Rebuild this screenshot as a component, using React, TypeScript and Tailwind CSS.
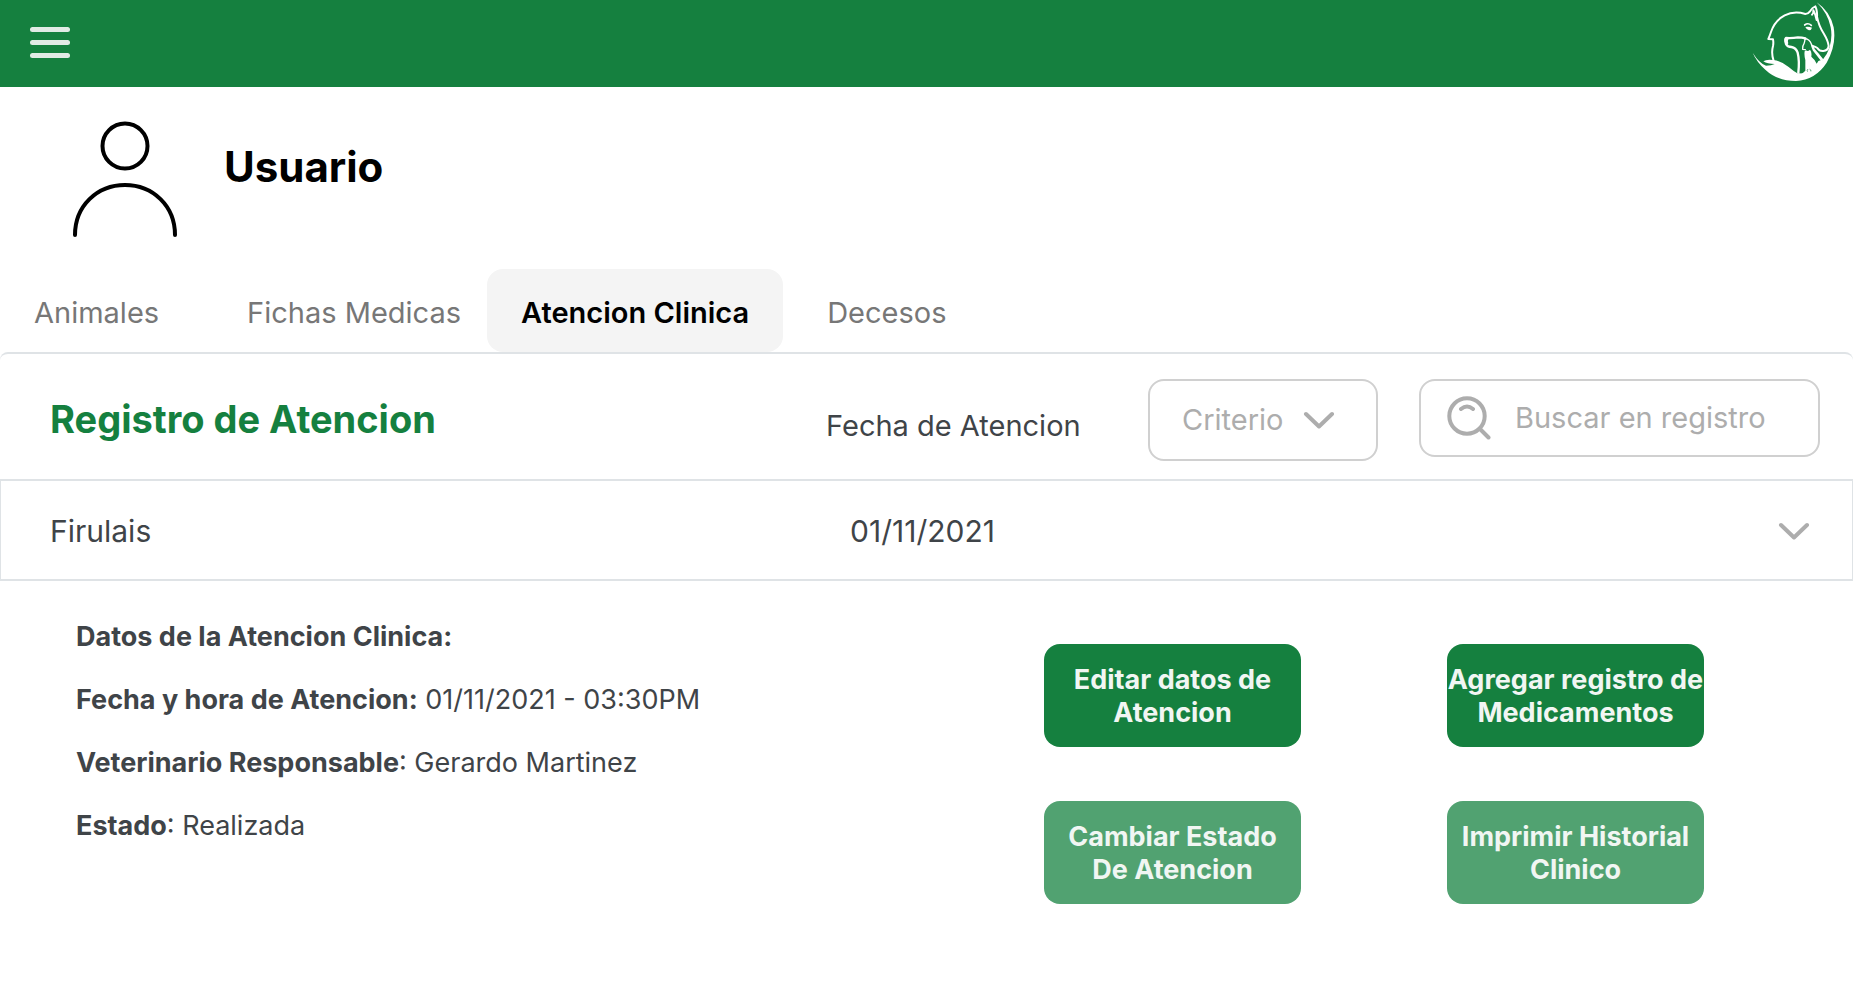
import { useState } from 'react';

function Logo() {
  return (
    <svg viewBox="0 0 339 261" className="h-[87px] w-[113px]" fill="none" stroke="#fff" strokeLinecap="round" strokeLinejoin="round" role="img" aria-label="Logo veterinaria">
      <path
        fill="#fff"
        stroke="none"
        d="M38 158 Q58 190 78 197 Q95 197 104 192 Q82 192 70 184 Q78 178 98 180 Q124 182 146 201 Q160 213 172 220 L180 220 Q188 222 196 212 L196 180 Q192 166 194 154 L198 151 Q203 156 210 149 Q216 155 214 170 Q226 180 230 191 Q236 178 246 182 Q262 164 268 144 Q278 112 272 82 Q264 40 230 7 Q270 34 281 82 Q290 136 260 188 Q226 240 168 243 Q112 243 76 209 Q50 186 38 158 Z"
      />
      <path strokeWidth="6" d="M101 183 Q93 160 99 138 Q101 128 99 118 L85 117 Q89 108 93 96 Q104 62 134 46 Q162 32 196 42 Q204 42 210 34 Q217 22 226 19 L229 27 Q232 40 231 50" />
      <path strokeWidth="6" d="M216 44 Q221 40 220 31 Q227 44 230 60 M231 50 Q236 78 252 102 Q264 122 266 138 Q264 152 250 153 Q238 154 232 144 Q226 140 220 139" />
      <path strokeWidth="5" d="M194 75 Q204 67 214 76" />
      <path fill="#fff" stroke="none" d="M196 81 Q206 78 216 83 Q214 91 207 91 Q200 90 196 81Z" />
      <path strokeWidth="7" d="M196 115 Q186 112 174 112 Q158 115 138 114 Q134 120 138 132 Q142 141 154 141 Q168 143 173 158 Q179 182 175 218" />
      <path fill="#fff" stroke="none" d="M135 113 L149 114 Q141 120 145 130 L140 136 Q130 124 135 113Z" />
      <path strokeWidth="4" d="M188 148 L196 149 M188 147 Q187 138 192 131 Q195 124 195 115 Q209 118 214 132 Q216 141 220 150 L246 183 M218 136 Q220 149 232 159 L250 181" />
      <path stroke="#15803f" strokeWidth="2" d="M203 208 q-3 3 -1 6 M210 208 q4 1 3 5" />
    </svg>
  );
}

function Chevron({ className }: { className: string }) {
  return (
    <svg viewBox="0 0 32 18" className={className} fill="none" stroke="#adadad" strokeWidth="4" strokeLinecap="round" strokeLinejoin="round" aria-hidden="true">
      <path d="M3 3 L16 15.500 L29 3" />
    </svg>
  );
}

const tabs = [
  { name: 'Animales', style: 'ml-[18px] mr-14 px-4' },
  { name: 'Fichas Medicas', style: 'mr-[10px] px-4' },
  { name: 'Atencion Clinica', style: 'mr-7 px-[34px]' },
  { name: 'Decesos', style: 'px-4' },
];

const details = [
  { label: 'Datos de la Atencion Clinica:', value: '' },
  { label: 'Fecha y hora de Atencion:', value: ' 01/11/2021 - 03:30PM' },
  { label: 'Veterinario Responsable', value: ': Gerardo Martinez' },
  { label: 'Estado', value: ': Realizada' },
];

const actions = [
  { lines: ['Editar datos de', 'Atencion'], color: 'bg-[#15803f]' },
  { lines: ['Agregar registro de', 'Medicamentos'], color: 'bg-[#15803f]' },
  { lines: ['Cambiar Estado', 'De Atencion'], color: 'bg-[#51a271]' },
  { lines: ['Imprimir Historial', 'Clinico'], color: 'bg-[#51a271]' },
];

export default function App() {
  const [active, setActive] = useState('Atencion Clinica');
  const [open, setOpen] = useState(true);

  return (
    <div className="min-h-screen bg-white font-['Inter',sans-serif] text-[#3f4448]">
      <header className="flex items-start justify-between bg-[#15803f]">
        <button type="button" aria-label="Menu" className="ml-[30px] mt-[27px] flex w-10 flex-col gap-2">
          <span className="h-[5px] rounded-full bg-[#e1ebe5]" />
          <span className="h-[5px] rounded-full bg-[#e1ebe5]" />
          <span className="h-[5px] rounded-full bg-[#e1ebe5]" />
        </button>
        <Logo />
      </header>

      <section className="flex items-start gap-[46px] pb-8 pl-[72px] pt-[33px] text-black">
        <svg viewBox="0 0 106 117" className="h-[117px] w-[106px]" fill="none" stroke="currentColor" strokeWidth="4" strokeLinecap="round" aria-hidden="true">
          <circle cx="53" cy="26" r="22.500" />
          <path d="M3 115 C3 86 25 65 53 65 C81 65 103 86 103 115" />
        </svg>
        <h1 className="mt-5 text-[42px] font-bold leading-[54px]">Usuario</h1>
      </section>

      <nav className="flex" aria-label="Secciones">
        {tabs.map((tab) => (
          <button
            key={tab.name}
            type="button"
            aria-current={active === tab.name ? 'page' : undefined}
            onClick={() => setActive(tab.name)}
            className={`${tab.style} h-[83px] whitespace-nowrap rounded-2xl pt-1 text-[29px] ${
              active === tab.name ? 'bg-[#f4f4f4] font-semibold text-black' : 'font-normal text-[#777]'
            }`}
          >
            {tab.name}
          </button>
        ))}
      </nav>

      <main>
        <div className="grid h-[127px] grid-cols-[826fr_322fr_705fr] items-center rounded-t-lg border-t-2 border-[#dfe3e6] pt-[6px]">
          <h2 className="pl-[50px] text-[38px] font-bold text-[#15803f]">Registro de Atencion</h2>
          <span className="whitespace-nowrap pt-3 text-[29px]">Fecha de Atencion</span>
          <div className="flex items-start justify-between gap-10 pr-[33px]">
            <div className="relative w-[230px]">
              <select aria-label="Criterio" className="h-[82px] w-full appearance-none rounded-2xl border-2 border-[#d0d0d0] bg-white pl-8 text-[29px] text-[#adadad]">
                <option>Criterio</option>
              </select>
              <Chevron className="pointer-events-none absolute right-[43px] top-8 h-[18px] w-8" />
            </div>
            <label className="flex h-[78px] w-[401px] items-center gap-6 rounded-2xl border-2 border-[#d0d0d0] pl-[26px]">
              <svg viewBox="0 0 44 44" className="h-11 w-11 shrink-0" fill="none" stroke="#adadad" strokeWidth="4" strokeLinecap="round" aria-hidden="true">
                <circle cx="20" cy="20" r="17.700" />
                <path d="M33 33 L41.500 41.500 M14 13 Q20 8 26 13" />
              </svg>
              <input type="text" aria-label="Buscar en registro" placeholder="Buscar en registro" className="w-full min-w-0 text-[29px] outline-none placeholder:text-[#adadad]" />
            </label>
          </div>
        </div>

        <button
          type="button"
          aria-expanded={open}
          aria-label="Firulais 01/11/2021"
          onClick={() => setOpen(!open)}
          className="grid h-[102px] w-full grid-cols-[826fr_322fr_705fr] items-center border-x border-y-2 border-[#dfe3e6] pt-[2px] text-left text-[30px]"
        >
          <span className="pl-[49px]">Firulais</span>
          <span className="pl-6">01/11/2021</span>
          <Chevron className="mr-[42px] h-[18px] w-8 justify-self-end" />
        </button>

        {open && (
          <div className="grid grid-cols-[1044fr_809fr] pb-24">
            <div className="flex flex-col gap-[31px] pl-[76px] pt-10 text-[27px] leading-8">
              {details.map((item) => (
                <p key={item.label}>
                  <strong className="font-bold">{item.label}</strong>
                  {item.value}
                </p>
              ))}
            </div>
            <div className="grid grid-cols-[257px_257px] content-start gap-x-[146px] gap-y-[54px] pt-[63px]">
              {actions.map((action) => (
                <button
                  key={action.lines[0]}
                  type="button"
                  className={`${action.color} flex h-[103px] flex-col items-center justify-center whitespace-nowrap rounded-2xl text-[27px] font-bold leading-[33px] text-[#f1f6f3]`}
                >
                  {action.lines.map((line) => (
                    <span key={line}>{line}</span>
                  ))}
                </button>
              ))}
            </div>
          </div>
        )}
      </main>
    </div>
  );
}
